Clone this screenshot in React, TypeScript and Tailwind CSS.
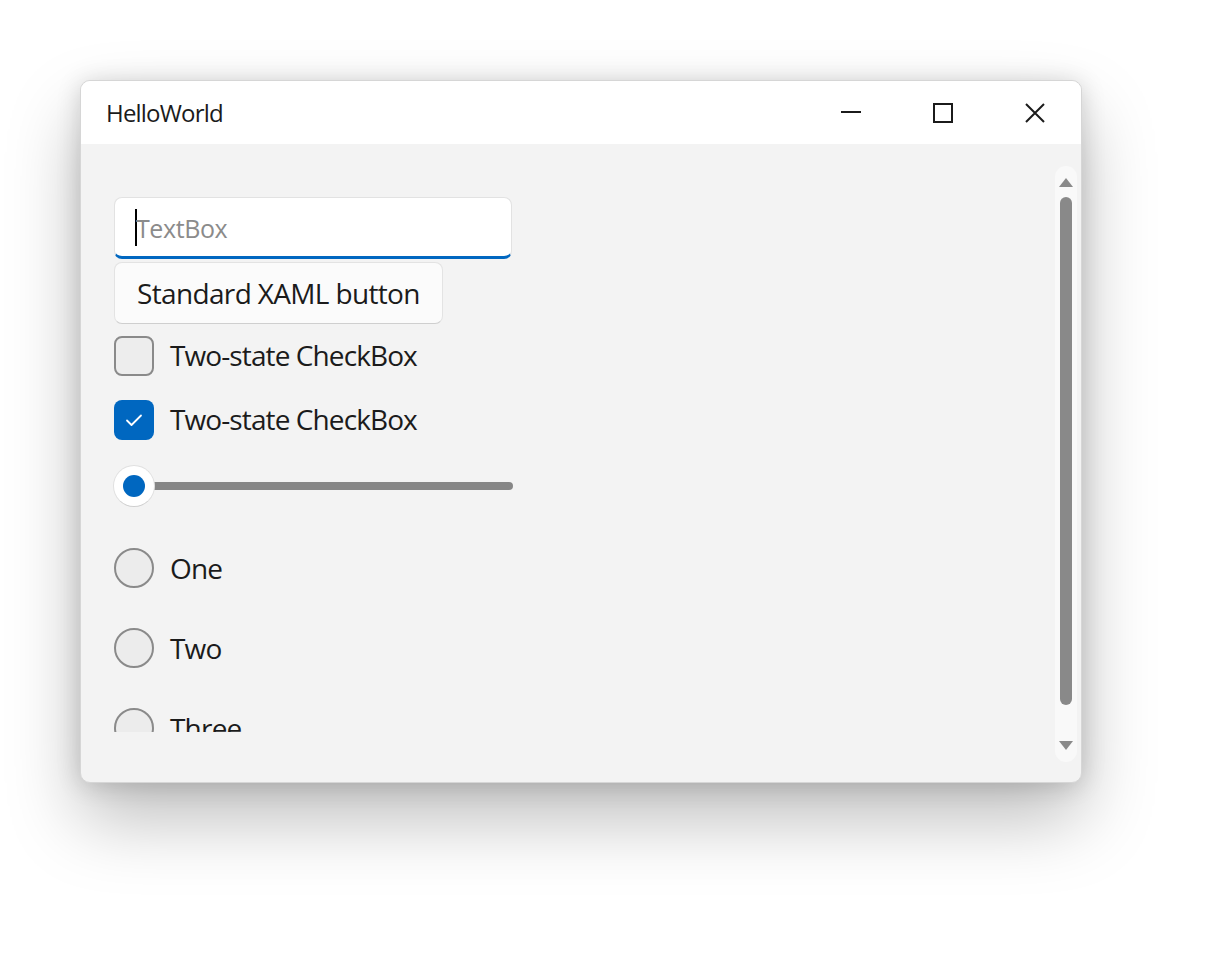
import React from "react";

const font = { fontFamily: '"Open Sans", "Noto Sans", sans-serif' };

function CheckBox(p: { checked?: boolean; label: string }) {
  return (
    <div className="flex h-16 shrink-0 items-center">
      <div
        className={`flex h-10 w-10 items-center justify-center rounded-lg ${
          p.checked ? "bg-[#0067c0]" : "border-2 border-[#8a8a8a] bg-[#ededed]"
        }`}
      >
        {p.checked && (
          <svg width="18" height="14" viewBox="0 0 18 14">
            <path d="M2 7.5 L6.5 12 L16 2.5" fill="none" stroke="white" strokeWidth="1.8" strokeLinecap="round" strokeLinejoin="round" />
          </svg>
        )}
      </div>
      <span className="ml-[16px] mt-[-2px] text-[28px] leading-none tracking-[-0.9px] text-[#1b1b1b]">{p.label}</span>
    </div>
  );
}

function Radio(p: { label: string }) {
  return (
    <div className="flex h-20 shrink-0 items-center">
      <div className="h-10 w-10 rounded-full border-2 border-[#8a8a8a] bg-[#ececec]" />
      <span className="ml-[16px] text-[28px] leading-none tracking-[-0.8px] text-[#1b1b1b]">{p.label}</span>
    </div>
  );
}

export default function App() {
  return (
    <div className="min-h-[954px] w-[1218px] bg-white pl-20 pt-20" style={font}>
      <div className="flex h-[703px] w-[1002px] flex-col overflow-hidden rounded-[10px] border border-[#d6d6d6] bg-[#f3f3f3] shadow-[0_36px_72px_rgba(0,0,0,0.26),0_2px_24px_rgba(0,0,0,0.16)]">
        {/* title bar */}
        <div className="flex h-[63px] shrink-0 items-center bg-white">
          <span className="ml-[25px] text-[24px] tracking-[-0.8px] text-[#1b1b1b]">HelloWorld</span>
          <div className="ml-auto flex h-full items-center">
            <div className="flex h-full w-[92px] items-center justify-center">
              <div className="mt-[-2px] h-[2px] w-5 bg-[#1b1b1b]" />
            </div>
            <div className="flex h-full w-[92px] items-center justify-center">
              <div className="h-5 w-5 border-2 border-[#1b1b1b]" />
            </div>
            <div className="flex h-full w-[92px] items-center justify-center">
              <svg width="20" height="20" viewBox="0 0 20 20">
                <path d="M1 1 L19 19 M19 1 L1 19" stroke="#1b1b1b" strokeWidth="2" />
              </svg>
            </div>
          </div>
        </div>

        {/* content */}
        <div className="flex flex-1">
          <div className="flex h-[588px] flex-1 flex-col overflow-hidden pl-[33px] pt-[53px]">
            <div className="relative flex h-[62px] w-[398px] shrink-0 items-center rounded-lg border border-[#e2e2e2] border-b-[3px] border-b-[#0067c0] bg-white">
              <div className="ml-[20px] h-[37px] w-[2px] bg-black" />
              <span className="ml-[-1px] mt-[3px] text-[25px] tracking-[-0.4px] text-[#8b8b8b]">TextBox</span>
            </div>
            <div className="mt-[3px] flex h-[62px] w-[329px] shrink-0 items-center rounded-lg border border-[#e3e3e3] border-b-[#cfcfcf] bg-[#fbfbfb] pl-[22px]">
              <span className="text-[28px] leading-none tracking-[-0.65px] text-[#1b1b1b]">Standard XAML button</span>
            </div>
            <CheckBox label="Two-state CheckBox" />
            <CheckBox checked label="Two-state CheckBox" />
            <div className="h-[76px] shrink-0 pt-[13px]">
              <div className="relative ml-[-1px] h-[42px] w-[400px]">
                <div className="absolute left-[20px] right-0 top-[17px] h-2 rounded-full bg-[#868686]" />
                <div className="absolute left-0 top-0 flex h-[42px] w-[42px] items-center justify-center rounded-full border border-[#e0e0e0] border-b-[#cfcfcf] bg-white">
                  <div className="h-[22px] w-[22px] rounded-full bg-[#0067c0]" />
                </div>
              </div>
            </div>
            <Radio label="One" />
            <Radio label="Two" />
            <Radio label="Three" />
          </div>

          {/* scrollbar */}
          <div className="pb-5 pr-1 pt-[22px]">
            <div className="flex h-[596px] w-[22px] flex-col items-center rounded-full bg-[#f9f9f9] py-3">
              <svg width="14" height="9" viewBox="0 0 14 9">
                <path d="M7 0 L14 9 L0 9 Z" fill="#8a8a8a" />
              </svg>
              <div className="mt-[10px] h-[508px] w-3 rounded-full bg-[#898989]" />
              <div className="flex-1" />
              <svg width="14" height="9" viewBox="0 0 14 9">
                <path d="M0 0 L14 0 L7 9 Z" fill="#8a8a8a" />
              </svg>
            </div>
          </div>
        </div>
      </div>
    </div>
  );
}
